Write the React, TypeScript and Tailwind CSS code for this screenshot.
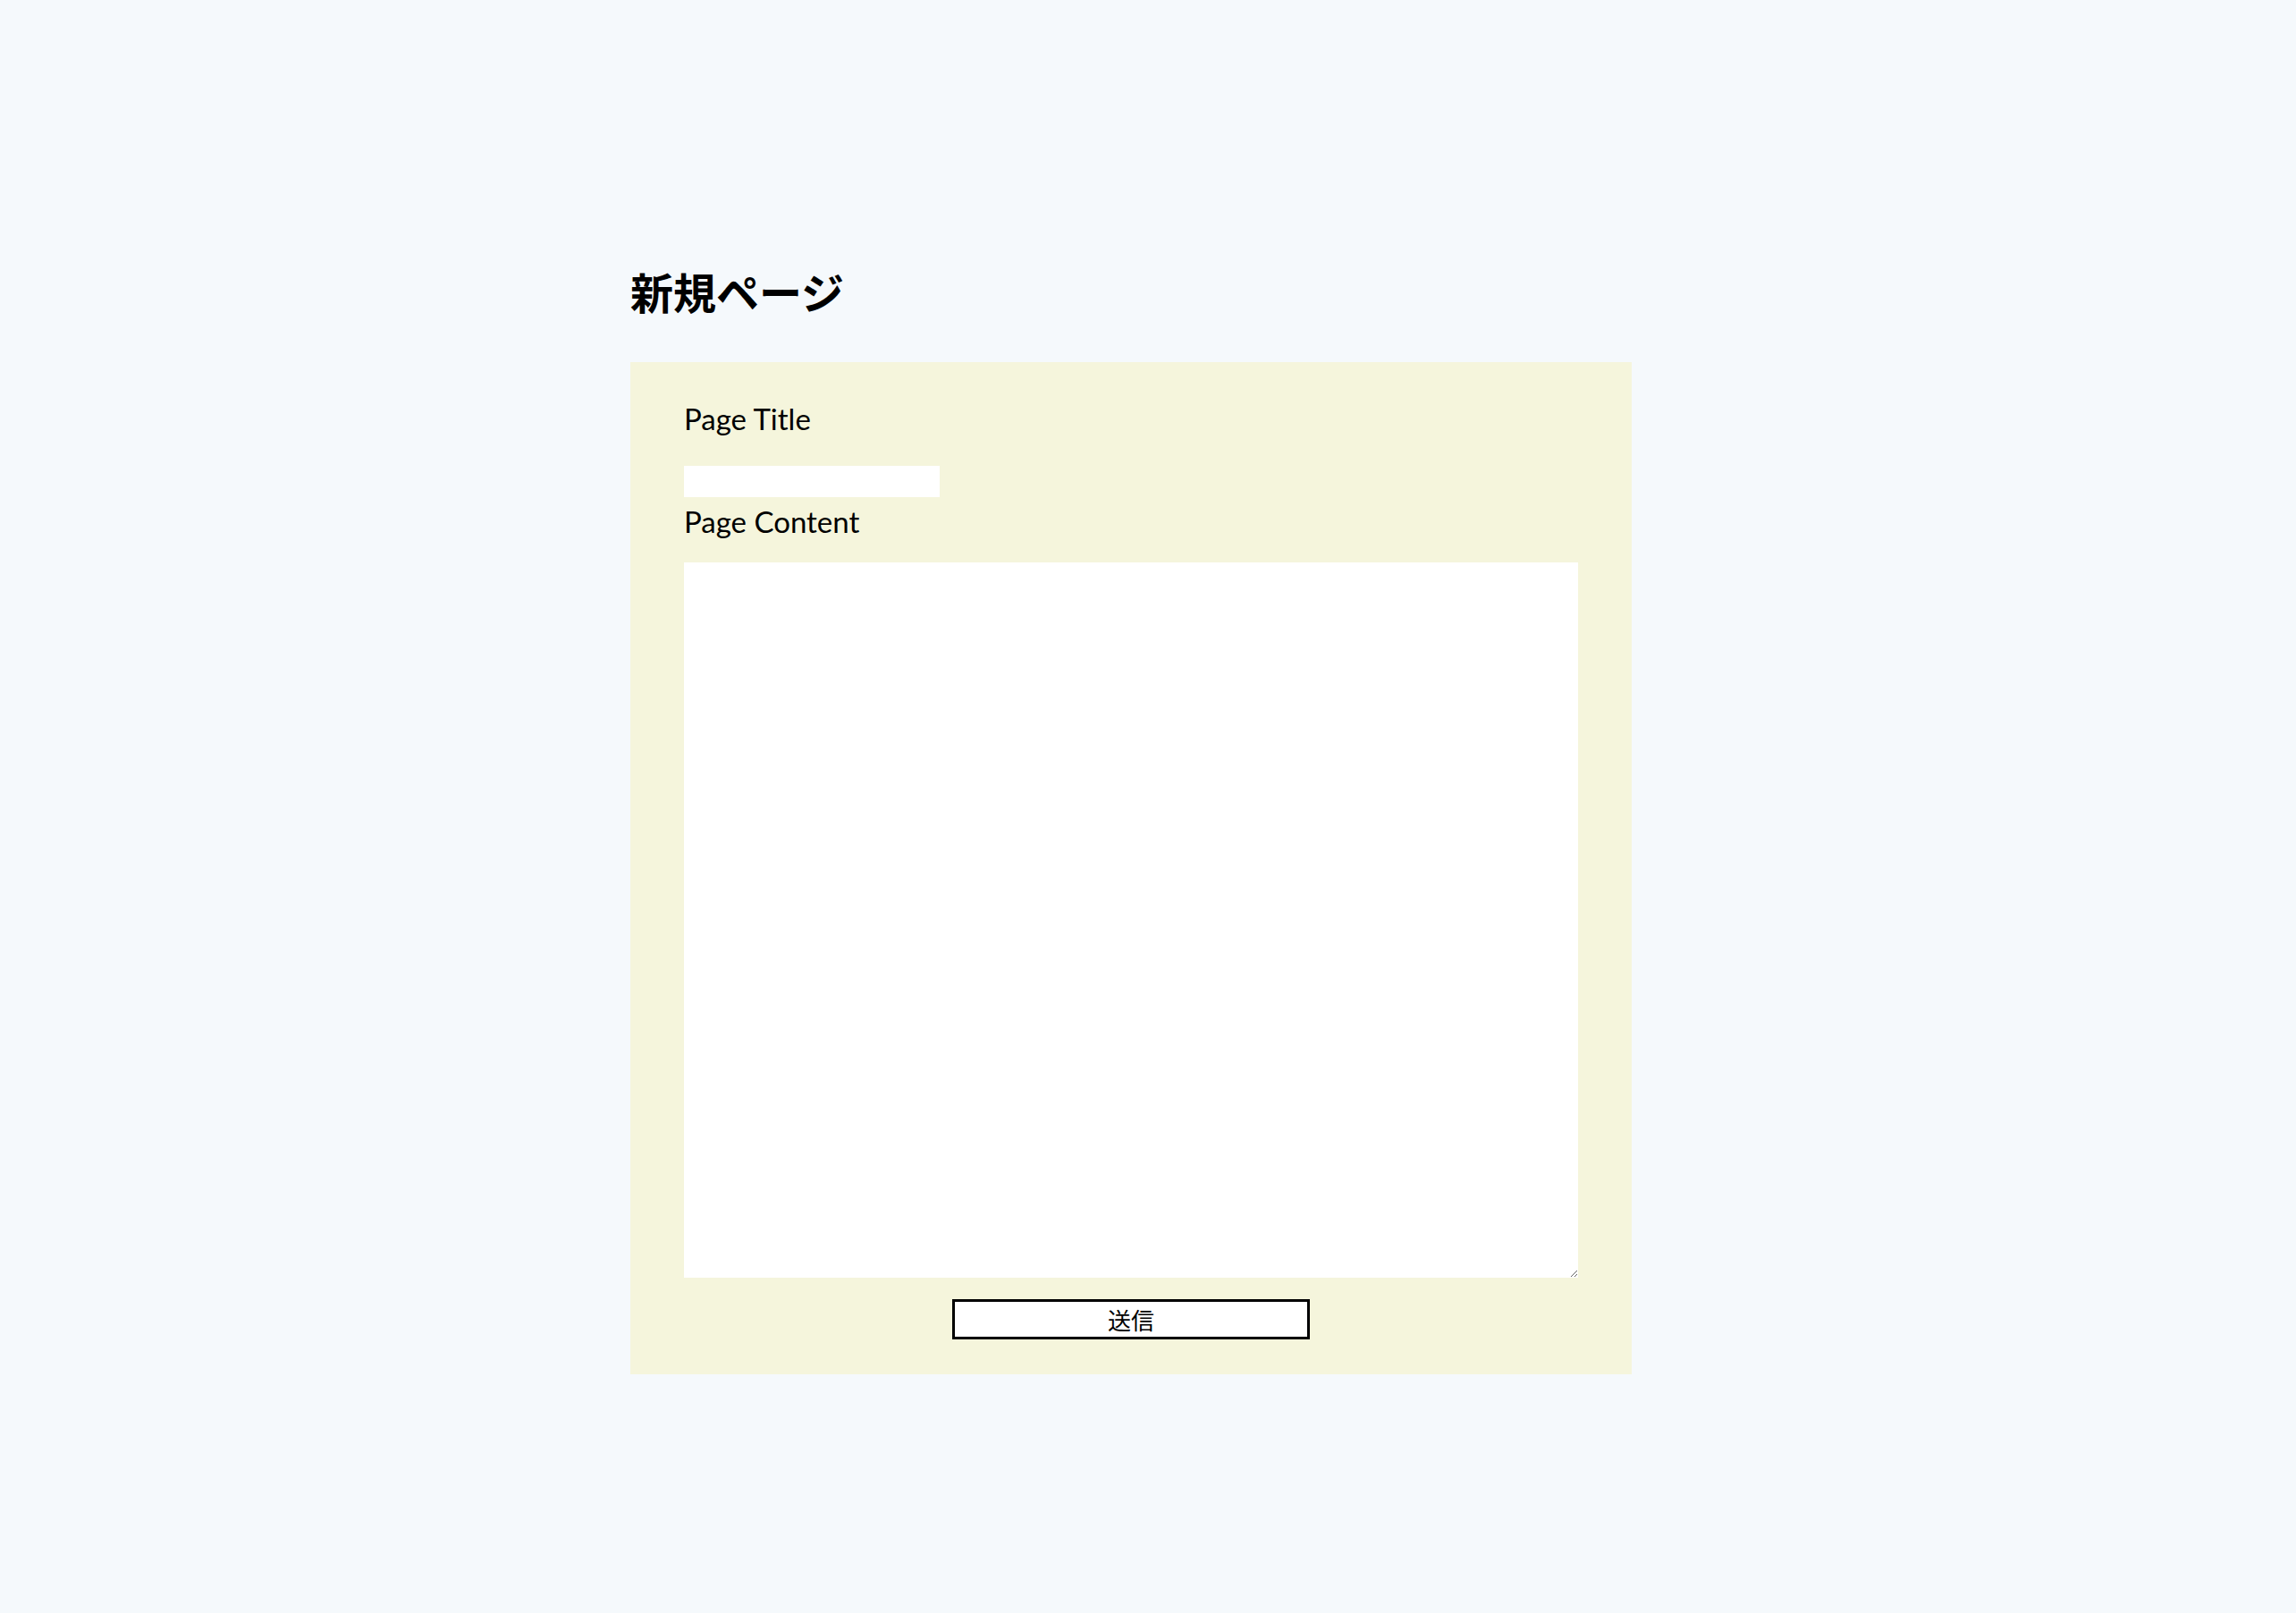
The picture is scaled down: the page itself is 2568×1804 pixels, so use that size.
export default function App() {
  return (
    <div className="min-h-screen bg-[#f5f9fc] pl-[705px] pt-[301px] font-['Lato','Noto_Sans_CJK_JP',sans-serif] text-black">
      <h1 className="h-[48px] text-[48px] leading-[48px] font-bold font-['Noto_Sans_CJK_JP',sans-serif]">新規ページ</h1>
      <form
        onSubmit={(e) => e.preventDefault()}
        className="mt-[56px] w-[1120px] bg-[#f5f5dc] px-[60px] pt-[41px] pb-[39px]"
      >
        <label htmlFor="title" className="block text-[33px] leading-[44px]">
          Page Title
        </label>
        <input id="title" type="text" className="mt-[31px] block h-[35px] w-[286px] bg-white outline-none" />
        <label htmlFor="content" className="mt-[5px] block text-[33px] leading-[44px]">
          Page Content
        </label>
        <textarea id="content" className="mt-[24px] block h-[800px] w-[1000px] bg-white outline-none" />
        <div className="mt-[24px] flex justify-center">
          <button
            type="submit"
            className="h-[45px] w-[400px] border-[3px] border-black bg-white text-[26px] leading-none font-['Noto_Sans_CJK_JP',sans-serif]"
          >
            送信
          </button>
        </div>
      </form>
    </div>
  )
}
